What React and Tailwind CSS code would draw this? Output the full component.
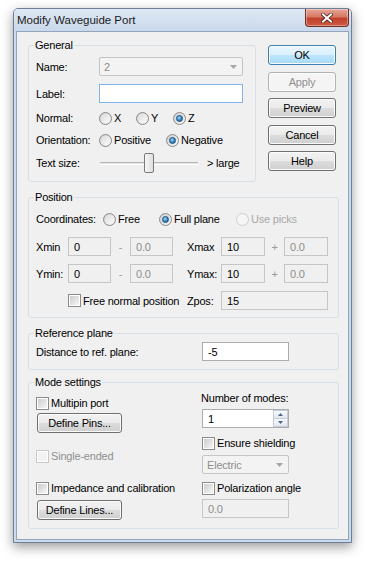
import React from "react";

const Radio = ({ checked, disabled }) => (
    <span
        className={`flex h-[13px] w-[13px] shrink-0 items-center justify-center rounded-full border ${
            disabled ? "border-[#cfcfcf] bg-[#f4f4f4]" : "border-[#8a8a8a] bg-[linear-gradient(135deg,#cfcfcf,#f6f6f6)]"
        }`}
    >
        {checked ? (
            <span className="h-[7px] w-[7px] rounded-full border border-[#1b4f7f] bg-[radial-gradient(circle_at_40%_35%,#9fdcff,#2c7cc0_60%,#1a5a95)]" />
        ) : (
            <span className={`h-[9px] w-[9px] rounded-full ${disabled ? "bg-[#f6f6f6]" : "bg-[linear-gradient(135deg,#dcdcdc,#fbfbfb)]"}`} />
        )}
    </span>
);

const Check = ({ disabled }) => (
    <span
        className={`flex h-[13px] w-[13px] shrink-0 items-center justify-center border bg-white ${
            disabled ? "border-[#c9c9c9]" : "border-[#8a8a8a]"
        }`}
    >
        <span className={`h-[9px] w-[9px] ${disabled ? "bg-[#f2f2f2]" : "bg-[linear-gradient(135deg,#cdcdcd,#f5f5f5)]"}`} />
    </span>
);

const Option = ({ w, checked, disabled, children }) => (
    <div className={`flex items-center gap-[2px] ${w}`}>
        <Radio checked={checked} disabled={disabled} />
        <span className={disabled ? "text-[#a8a8a8]" : ""}>{children}</span>
    </div>
);

const CheckItem = ({ disabled, children }) => (
    <div className="flex h-[16px] items-center gap-[2px]">
        <Check disabled={disabled} />
        <span className={disabled ? "text-[#8f8f8f]" : ""}>{children}</span>
    </div>
);

const tones = {
    white: "bg-white border-[#abadb3] text-black",
    focus: "bg-white border-[#7eb4ea] text-black",
    ro: "bg-[#f0f0f0] border-[#c6c6c6] text-black",
    dis: "bg-[#f0f0f0] border-[#c6c6c6] text-[#8d8d8d]",
};

const Field = ({ w, value, tone = "white" }) => (
    <div className={`flex h-[19px] shrink-0 items-center border pl-[5px] ${tones[tone]} ${w}`}>{value}</div>
);

const Combo = ({ w, value }) => (
    <div
        className={`flex h-[19px] shrink-0 items-center justify-between rounded-[2px] border border-[#c5c5c5] bg-[#f3f3f3] pl-[4px] pr-[5px] text-[#8d8d8d] ${w}`}
    >
        <span>{value}</span>
        <svg width="7" height="4" viewBox="0 0 7 4">
            <path d="M0 0h7L3.5 4z" fill="#a5a5a5" />
        </svg>
    </div>
);

const Btn = ({ w = "w-[68px]", h = "h-[20px]", kind = "normal", children }) => {
    const kinds = {
        normal: "border-[#707070] bg-[linear-gradient(#f2f2f2,#ebebeb_50%,#dddddd_50%,#cfcfcf)] text-black",
        def: "border-[#3c7fb1] bg-[linear-gradient(#eaf6fd,#d9f0fc_50%,#bee6fd_50%,#a7d9f5)] text-black",
        dis: "border-[#adb2b5] bg-[#f4f4f4] text-[#8f8f8f]",
    };
    return (
        <div
            className={`flex shrink-0 items-center justify-center rounded-[3px] border shadow-[inset_0_0_0_1px_#fbfbfb] ${kinds[kind]} ${w} ${h}`}
        >
            {children}
        </div>
    );
};

const Group = ({ title, className = "", children }) => (
    <fieldset className={`rounded-[3px] border border-[#d5dfe5] ${className}`}>
        <legend className="ml-[5px] px-[1px] leading-[14px]">{title}</legend>
        {children}
    </fieldset>
);

const CloseBtn = () => (
    <div className="flex h-[18px] w-[44px] items-center justify-center rounded-b-[4px] border border-t-0 border-[#6f2f24] bg-[linear-gradient(#e7a798,#d77a66_45%,#c2412b_55%,#cc5a42)] shadow-[inset_0_0_0_1px_rgba(255,255,255,0.35)]">
        <svg width="12" height="10" viewBox="0 0 12 10">
            <path d="M2 1.5L10 8.5M10 1.5L2 8.5" stroke="#4a2019" strokeWidth="3.6" strokeLinecap="square" />
            <path d="M2 1.5L10 8.5M10 1.5L2 8.5" stroke="#ffffff" strokeWidth="2" strokeLinecap="square" />
        </svg>
    </div>
);

const Spin = () => (
    <div className="flex h-[19px] w-[87px] border border-[#abadb3] bg-white">
        <div className="flex flex-1 items-center pl-[5px]">1</div>
        <div className="flex w-[15px] flex-col">
            <div className="flex flex-1 items-center justify-center border border-[#c3ccd7] bg-[linear-gradient(#f7f9fb,#e3e8ee)]">
                <svg width="5" height="3" viewBox="0 0 5 3">
                    <path d="M0 3h5L2.5 0z" fill="#4d6591" />
                </svg>
            </div>
            <div className="flex flex-1 items-center justify-center border border-t-0 border-[#c3ccd7] bg-[linear-gradient(#f7f9fb,#e3e8ee)]">
                <svg width="5" height="3" viewBox="0 0 5 3">
                    <path d="M0 0h5L2.5 3z" fill="#4d6591" />
                </svg>
            </div>
        </div>
    </div>
);

const App = () => {
    return (
        <div className="min-h-screen bg-white pl-[13px] pt-[8px] font-['Segoe_UI','Liberation_Sans',Arial,sans-serif] text-[11px] leading-[14px] tracking-[-0.2px] text-black">
            <div className="w-[339px] rounded-t-[5px] border border-[#6d7f96] bg-[#cbdaec] shadow-[0_4px_12px_rgba(0,0,0,0.4)]">
                {/* title bar */}
                <div className="flex h-[22px] items-start justify-between rounded-t-[4px] bg-[linear-gradient(#dfe9f5,#c9d8ea)] pl-[3px] pr-[2px]">
                    <span className="mt-[4px] text-[11.5px] leading-[14px] tracking-normal text-[#1a1a1a]">Modify Waveguide Port</span>
                    <CloseBtn />
                </div>

                <div className="mx-[2px] mb-[2px] h-[509px] border border-[#93a5bc] bg-[#f0f0f0] pl-[11px] pt-[6px]">
                    <div className="flex gap-[12px]">
                        <Group title="General" className="w-[228px]">
                            <div className="pb-[8px] pl-[7px] pt-[5px]">
                                <div className="flex h-[19px] items-center">
                                    <span className="w-[63px]">Name:</span>
                                    <Combo w="w-[144px]" value="2" />
                                </div>
                                <div className="mt-[8px] flex h-[19px] items-center">
                                    <span className="w-[63px]">Label:</span>
                                    <Field w="w-[144px]" value="" tone="focus" />
                                </div>
                                <div className="mt-[7px] flex h-[16px] items-center">
                                    <span className="w-[63px]">Normal:</span>
                                    <Option w="w-[37px]">X</Option>
                                    <Option w="w-[37px]">Y</Option>
                                    <Option checked>Z</Option>
                                </div>
                                <div className="mt-[6px] flex h-[16px] items-center">
                                    <span className="w-[63px]">Orientation:</span>
                                    <Option w="w-[67px]">Positive</Option>
                                    <Option checked>Negative</Option>
                                </div>
                                <div className="mt-[5px] flex h-[20px] items-center">
                                    <span className="w-[64px]">Text size:</span>
                                    <div className="relative h-[20px] w-[98px]">
                                        <div className="mt-[9px] h-[3px] border-b border-t border-b-white border-t-[#b7b7b7] bg-[#e3e3e3]" />
                                        <div className="absolute left-[44px] top-[0px] h-[20px] w-[10px] rounded-[2px] border border-[#7a7a7a] bg-[linear-gradient(90deg,#f7f7f7,#dedede)]" />
                                    </div>
                                    <span className="ml-[9px]">&gt; large</span>
                                </div>
                            </div>
                        </Group>

                        <div className="mt-[7px] flex flex-col gap-[6.5px]">
                            <Btn kind="def">OK</Btn>
                            <Btn kind="dis">Apply</Btn>
                            <Btn>Preview</Btn>
                            <Btn>Cancel</Btn>
                            <Btn>Help</Btn>
                        </div>
                    </div>

                    <Group title="Position" className="mt-[8px] w-[311px]">
                        <div className="pb-[7px] pl-[7px] pt-[7px]">
                            <div className="flex h-[16px] items-center">
                                <span className="w-[67px]">Coordinates:</span>
                                <Option w="w-[56px]">Free</Option>
                                <Option w="w-[77px]" checked>Full plane</Option>
                                <Option disabled>Use picks</Option>
                            </div>
                            <div className="mt-[10px] flex h-[19px] items-center">
                                <span className="w-[32px]">Xmin</span>
                                <Field w="w-[43px]" value="0" tone="ro" />
                                <span className="w-[19px] text-center text-[#9a9a9a]">-</span>
                                <Field w="w-[43px]" value="0.0" tone="dis" />
                                <span className="ml-[14px] w-[34px]">Xmax</span>
                                <Field w="w-[44px]" value="10" tone="ro" />
                                <span className="w-[19px] text-center text-[#9a9a9a]">+</span>
                                <Field w="w-[44px]" value="0.0" tone="dis" />
                            </div>
                            <div className="mt-[8px] flex h-[19px] items-center">
                                <span className="w-[32px]">Ymin:</span>
                                <Field w="w-[43px]" value="0" tone="ro" />
                                <span className="w-[19px] text-center text-[#9a9a9a]">-</span>
                                <Field w="w-[43px]" value="0.0" tone="dis" />
                                <span className="ml-[14px] w-[34px]">Ymax:</span>
                                <Field w="w-[44px]" value="10" tone="ro" />
                                <span className="w-[19px] text-center text-[#9a9a9a]">+</span>
                                <Field w="w-[44px]" value="0.0" tone="dis" />
                            </div>
                            <div className="mt-[8px] flex h-[19px] items-center">
                                <div className="ml-[32px] w-[119px]">
                                    <CheckItem>Free normal position</CheckItem>
                                </div>
                                <span className="w-[34px]">Zpos:</span>
                                <Field w="w-[107px]" value="15" tone="ro" />
                            </div>
                        </div>
                    </Group>

                    <Group title="Reference plane" className="mt-[8px] w-[311px]">
                        <div className="flex items-center pb-[8px] pl-[7px] pt-[2px]">
                            <span className="w-[166px]">Distance to ref. plane:</span>
                            <Field w="w-[87px]" value="-5" />
                        </div>
                    </Group>

                    <Group title="Mode settings" className="mt-[5px] w-[311px]">
                        <div className="flex items-start pb-[8px] pl-[7px]">
                            <div className="mt-[6px] flex w-[166px] flex-col items-start">
                                <CheckItem>Multipin port</CheckItem>
                                <div className="ml-[1px] mt-[2px]">
                                    <Btn w="w-[85px]">Define Pins...</Btn>
                                </div>
                                <div className="mt-[15px]">
                                    <CheckItem disabled>Single-ended</CheckItem>
                                </div>
                                <div className="mt-[16px]">
                                    <CheckItem>Impedance and calibration</CheckItem>
                                </div>
                                <div className="ml-[1px] mt-[4px]">
                                    <Btn w="w-[85px]">Define Lines...</Btn>
                                </div>
                            </div>
                            <div className="mt-[1px] flex flex-col items-start">
                                <div className="-ml-[1px] flex h-[16px] items-center">Number of modes:</div>
                                <div className="mt-[3px]">
                                    <Spin />
                                </div>
                                <div className="mt-[7px]">
                                    <CheckItem>Ensure shielding</CheckItem>
                                </div>
                                <div className="mt-[4px]">
                                    <Combo w="w-[87px]" value="Electric" />
                                </div>
                                <div className="mt-[6px]">
                                    <CheckItem>Polarization angle</CheckItem>
                                </div>
                                <div className="mt-[3px]">
                                    <Field w="w-[87px]" value="0.0" tone="dis" />
                                </div>
                            </div>
                        </div>
                    </Group>
                </div>
            </div>
        </div>
    );
};

export default App;
